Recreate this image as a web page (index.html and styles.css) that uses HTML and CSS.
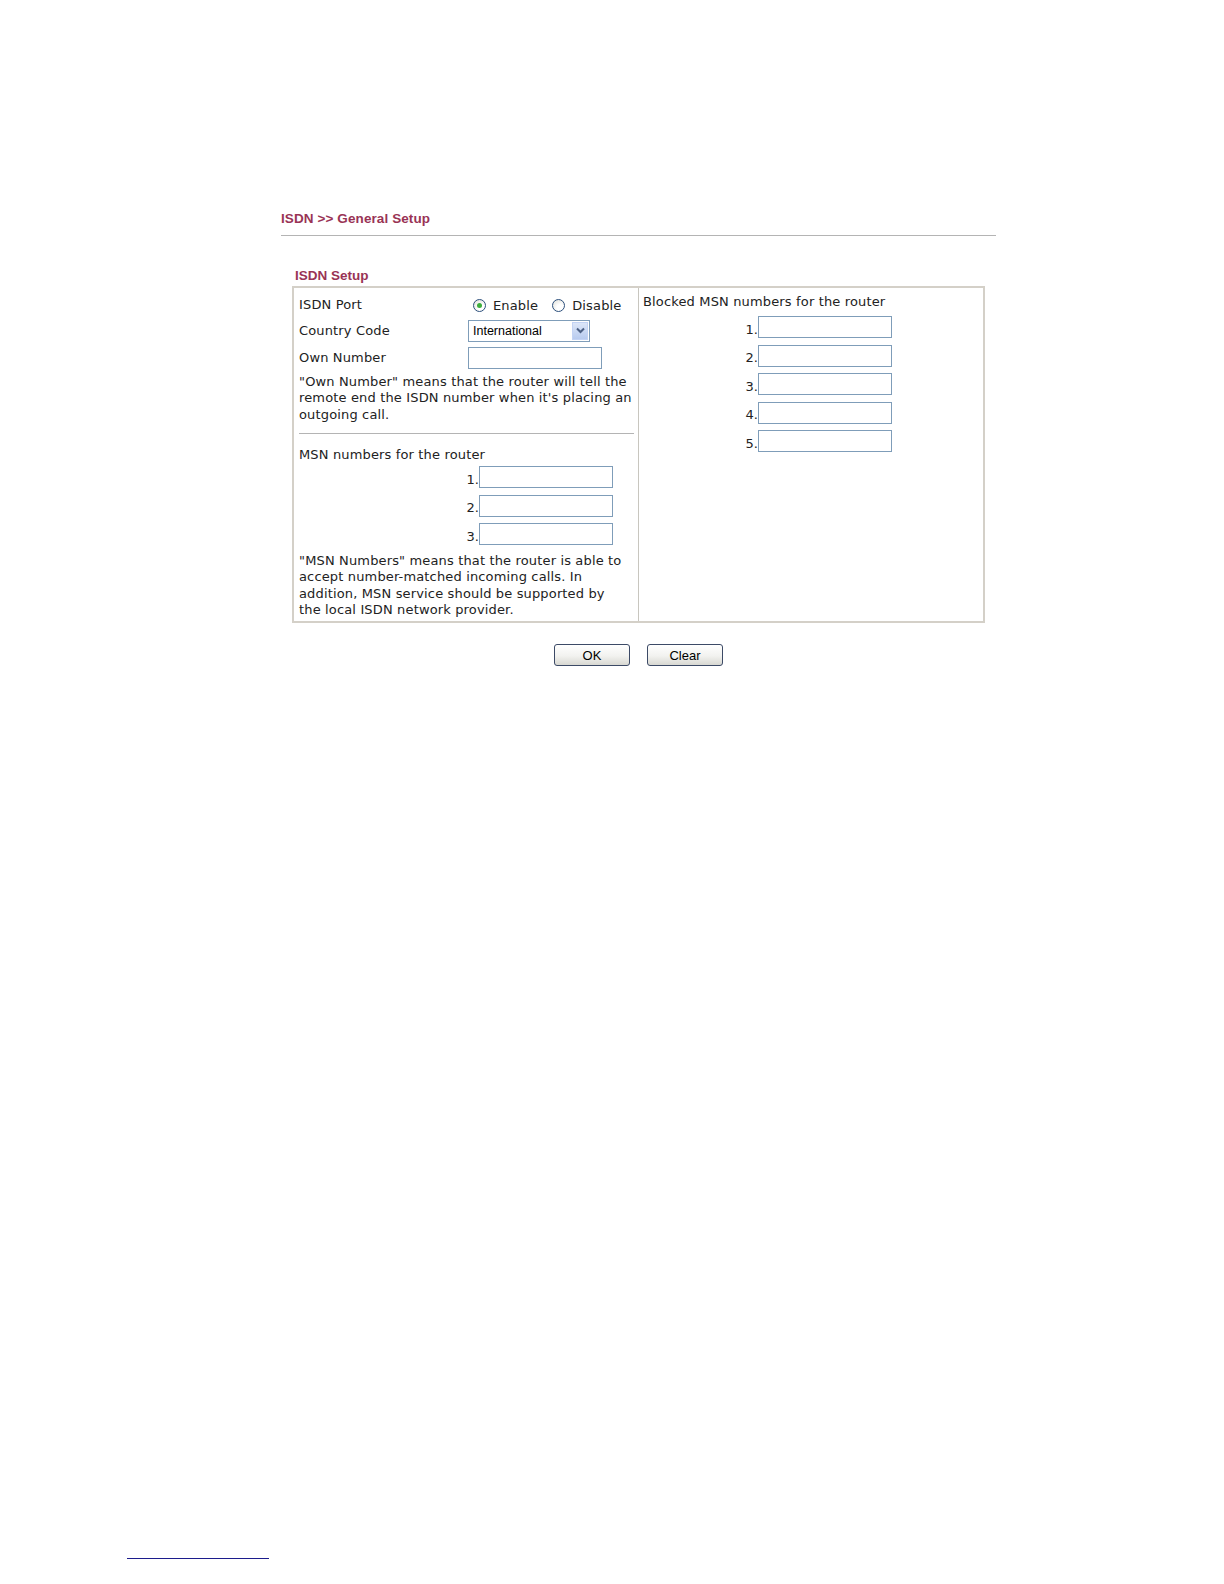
FILE: index.html
```html
<!DOCTYPE html>
<html>
<head>
<meta charset="utf-8">
<title>ISDN General Setup</title>
<link rel="stylesheet" href="styles.css">
</head>
<body>
<div class="page">
  <div class="content">
    <h1 class="title">ISDN &gt;&gt; General Setup</h1>
    <div class="rule"></div>
    <h2 class="section">ISDN Setup</h2>
    <div class="box">
      <div class="col left">
        <div class="row">
          <span class="lbl">ISDN Port</span>
          <span class="radios">
            <span class="radio checked"></span><span class="rtext">Enable</span>
            <span class="radio"></span><span class="rtext">Disable</span>
          </span>
        </div>
        <div class="row">
          <span class="lbl">Country Code</span>
          <span class="select"><span class="seltext">International</span><span class="arrow"><svg width="9" height="7" viewBox="0 0 9 7"><path d="M1 1.5 L4.5 5 L8 1.5" fill="none" stroke="#4d6185" stroke-width="2"/></svg></span></span>
        </div>
        <div class="row">
          <span class="lbl">Own Number</span>
          <span class="input own"></span>
        </div>
        <p class="note">"Own Number" means that the router will tell the remote end the ISDN number when it's placing an outgoing call.</p>
        <div class="divider"></div>
        <div class="subhead">MSN numbers for the router</div>
        <div class="nums msn">
          <div class="num"><span class="n">1.</span><span class="input"></span></div>
          <div class="num"><span class="n">2.</span><span class="input"></span></div>
          <div class="num"><span class="n">3.</span><span class="input"></span></div>
        </div>
        <p class="note note2">"MSN Numbers" means that the router is able to accept number-matched incoming calls. In addition, MSN service should be supported by<br>the local ISDN network provider.</p>
      </div>
      <div class="col right">
        <div class="subhead top">Blocked MSN numbers for the router</div>
        <div class="nums blocked">
          <div class="num"><span class="n">1.</span><span class="input"></span></div>
          <div class="num"><span class="n">2.</span><span class="input"></span></div>
          <div class="num"><span class="n">3.</span><span class="input"></span></div>
          <div class="num"><span class="n">4.</span><span class="input"></span></div>
          <div class="num"><span class="n">5.</span><span class="input"></span></div>
        </div>
      </div>
    </div>
    <div class="buttons">
      <button class="btn">OK</button>
      <button class="btn">Clear</button>
    </div>
  </div>
  <div class="footer"><div class="fline"></div></div>
</div>
</body>
</html>
```
FILE: styles.css
```css
html, body {
  margin: 0;
  padding: 0;
  background: #ffffff;
}
.page {
  height: 1584px;
  display: flex;
  flex-direction: column;
  font-family: "DejaVu Sans", Verdana, sans-serif;
  font-size: 13px;
  letter-spacing: 0.15px;
  color: #222;
}
.content {
  padding-left: 281px;
  width: 715px;
}
.title {
  margin: 210px 0 0 0;
  font-family: "Liberation Sans", Arial, sans-serif;
  font-weight: bold;
  font-size: 13.5px;
  line-height: 17px;
  letter-spacing: 0.1px;
  color: #993355;
}
.rule {
  margin-top: 8px;
  height: 1px;
  background: #b4b4b4;
}
.section {
  margin: 31px 0 0 14px;
  font-family: "Liberation Sans", Arial, sans-serif;
  font-weight: bold;
  font-size: 13.5px;
  line-height: 17px;
  letter-spacing: 0;
  color: #993355;
}
.box {
  margin: 2px 0 0 11px;
  width: 689px;
  height: 333px;
  border: 2px solid #d4d0c8;
  display: flex;
}
.col {
  box-sizing: border-box;
}
.left {
  width: 345px;
  padding: 3px 2px 0 5px;
  border-right: 1px solid #c8c6bf;
}
.right {
  flex: 1;
  padding: 3px 4px 0 4px;
}
.row {
  display: flex;
  align-items: center;
  height: 26.5px;
}
.lbl {
  width: 169px;
  flex: none;
}
.radios {
  display: flex;
  align-items: center;
  margin-top: 2px;
}
.radio {
  width: 11px;
  height: 11px;
  border: 1px solid #2c4f7c;
  border-radius: 50%;
  background: radial-gradient(circle at 65% 70%, #ffffff 30%, #dcdcd4 100%);
  margin-left: 5px;
  margin-right: 7px;
  position: relative;
}
.radio.checked::after {
  content: "";
  position: absolute;
  left: 3px;
  top: 3px;
  width: 5px;
  height: 5px;
  border-radius: 50%;
  background: #3cae3c;
}
.rtext + .radio {
  margin-left: 14px;
}
.select {
  width: 120px;
  height: 20px;
  border: 1px solid #7f9db9;
  display: flex;
  align-items: center;
  font-family: "Liberation Sans", Arial, sans-serif;
  font-size: 12.5px;
  letter-spacing: 0;
  color: #000;
}
.seltext {
  flex: 1;
  padding-left: 4px;
}
.arrow {
  width: 16px;
  height: 18px;
  margin-right: 1px;
  background: linear-gradient(#dce6f8, #b8cbef);
  border: 1px solid #c3d3f4;
  box-sizing: border-box;
  display: flex;
  align-items: center;
  justify-content: center;
}
.input {
  display: block;
  width: 132px;
  height: 20px;
  border: 1px solid #7f9db9;
  background: #fff;
}
.input.own {
  margin-top: 2px;
}
.note {
  margin: 3px 0 0 0;
  line-height: 16.5px;
}
.divider {
  margin-top: 10px;
  margin-right: 2px;
  height: 1px;
  background: #b4b4b4;
}
.subhead {
  margin-top: 13px;
  line-height: 16px;
}
.subhead.top {
  margin-top: 3px;
}
.nums {
  display: flex;
  flex-direction: column;
}
.num {
  display: flex;
  align-items: center;
  height: 28.5px;
}
.msn .num {
  padding-left: 162px;
}
.blocked {
  margin-top: 3px;
}
.blocked .num {
  padding-left: 97px;
}
.n {
  width: 18px;
  text-align: right;
  margin-top: 4px;
  letter-spacing: 0;
}
.note2 {
  margin-top: 4px;
}
.buttons {
  display: flex;
  justify-content: center;
  gap: 17px;
  margin-top: 21px;
}
.btn {
  width: 76px;
  height: 22px;
  border: 1px solid #3c4a66;
  border-radius: 3px;
  background: linear-gradient(#ffffff 0%, #f2f2ef 55%, #d8d8d2 100%);
  font-family: "Liberation Sans", Arial, sans-serif;
  font-size: 13px;
  color: #000;
  padding: 0;
}
.footer {
  margin-top: auto;
  padding: 0 0 25px 127px;
}
.fline {
  width: 142px;
  height: 1px;
  background: #1c1c8c;
}
```
